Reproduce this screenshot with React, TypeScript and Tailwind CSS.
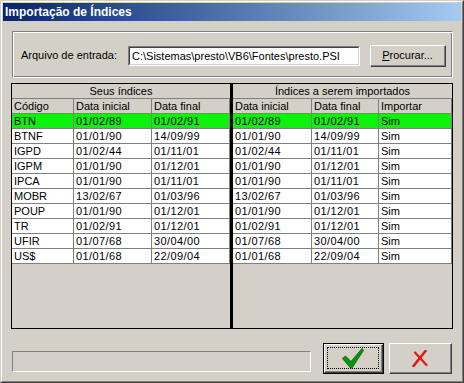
const rows = [
  ["BTN", "01/02/89", "01/02/91"],
  ["BTNF", "01/01/90", "14/09/99"],
  ["IGPD", "01/02/44", "01/11/01"],
  ["IGPM", "01/01/90", "01/12/01"],
  ["IPCA", "01/01/90", "01/11/01"],
  ["MOBR", "13/02/67", "01/03/96"],
  ["POUP", "01/01/90", "01/12/01"],
  ["TR", "01/02/91", "01/12/01"],
  ["UFIR", "01/07/68", "30/04/00"],
  ["US$", "01/01/68", "22/09/04"],
];

const cell =
  "h-[15px] border-r border-b border-[#808080] pl-[2px] leading-[14px] whitespace-nowrap overflow-hidden";
const date = "tracking-[0.4px]";

function Panel({
  title,
  cols,
  heads,
  data,
}: {
  title: string;
  cols: string;
  heads: string[];
  data: string[][];
}) {
  return (
    <div className="flex flex-col">
      <div className="h-[15px] border-b border-[#808080] bg-[#d4d0c8] text-center leading-[14px]">
        {title}
      </div>
      <div className={`grid ${cols} bg-[#d4d0c8]`}>
        {heads.map((h) => (
          <div key={h} className={cell}>
            {h}
          </div>
        ))}
      </div>
      {data.map((r, i) => (
        <div
          key={i}
          className={`grid ${cols} ${i === 0 ? "bg-[#0cf20c]" : "bg-white"}`}
        >
          {r.map((c, j) => (
            <div key={j} className={`${cell} ${c.includes("/") ? date : ""}`}>
              {c}
            </div>
          ))}
        </div>
      ))}
    </div>
  );
}

function CheckIcon() {
  return (
    <svg width="22" height="21" viewBox="0 0 22 21">
      <path
        d="M0.5 10.5 L3.5 8 L9 13.5 L20 0.5 L21.5 2.5 L10 20 L8.5 20 Z"
        fill="#0b930b"
        stroke="#056005"
        strokeWidth="0.8"
        strokeLinejoin="round"
      />
    </svg>
  );
}

function CrossIcon() {
  return (
    <svg width="16" height="17" viewBox="0 0 16 17">
      <path d="M1.5 16 L13.5 1" stroke="#e01818" strokeWidth="2.6" strokeLinecap="round" />
      <path d="M3 2.5 L14.5 15" stroke="#e01818" strokeWidth="2.2" strokeLinecap="round" />
    </svg>
  );
}

export default function App() {
  return (
    <div className="w-[464px] h-[383px] border border-t-[#d4d0c8] border-l-[#d4d0c8] border-r-[#404040] border-b-[#404040] bg-[#d4d0c8] font-['Liberation_Sans',Arial,sans-serif] text-[11px] text-black">
      <div className="h-full flex flex-col border border-t-white border-l-white border-r-[#808080] border-b-[#808080] p-px">
        <div className="h-[18px] shrink-0 bg-gradient-to-r from-[#0a246a] to-[#a6caf0] pl-[2px] text-[12px] font-bold leading-[18px] text-white">
          Importação de Índices
        </div>

        <div className="flex flex-1 flex-col pl-[8px]">
          <div className="ml-px mt-[10px] flex h-[47px] w-[441px] items-center border border-t-[#808080] border-l-[#808080] border-r-white border-b-white shadow-[inset_1px_1px_0_#fff,inset_-1px_-1px_0_#808080] pl-[8px]">
            <span className="mt-[2px]">Arquivo de entrada:</span>
            <div className="ml-[11px] mt-[2px] h-[20px] w-[232px] border border-t-[#808080] border-l-[#808080] border-r-white border-b-white">
              <div className="h-full border border-t-[#404040] border-l-[#404040] border-r-[#d4d0c8] border-b-[#d4d0c8] bg-white pl-[2px] leading-[16px] whitespace-nowrap">
                C:\Sistemas\presto\VB6\Fontes\presto.PSI
              </div>
            </div>
            <button className="ml-[10px] mt-[2px] h-[22px] w-[76px] border border-t-white border-l-white border-r-[#404040] border-b-[#404040] bg-[#d4d0c8]">
              <span className="flex h-full items-center justify-center border-r border-b border-[#808080]">
                <span className="underline">P</span>rocurar...
              </span>
            </button>
          </div>

          <div className="mt-[5px] flex h-[246px] w-[442px] border border-black bg-[#d4d0c8]">
            <div className="w-[218px]">
              <Panel
                title="Seus índices"
                cols="grid-cols-[62px_78px_78px]"
                heads={["Código", "Data inicial", "Data final"]}
                data={rows}
              />
            </div>
            <div className="w-[3px] bg-black" />
            <div className="w-[219px]">
              <Panel
                title="Índices a serem importados"
                cols="grid-cols-[79px_67px_73px]"
                heads={["Data inicial", "Data final", "Importar"]}
                data={rows.map((r) => [r[1], r[2], "Sim"])}
              />
            </div>
          </div>

          <div className="flex items-start">
            <div className="ml-px mt-[22px] h-[21px] w-[299px] border border-t-[#808080] border-l-[#808080] border-r-white border-b-white" />
            <button className="ml-[12px] mt-[14px] h-[31px] w-[61px] border border-black bg-[#d4d0c8]">
              <div className="h-full border border-t-white border-l-white border-r-[#404040] border-b-[#404040]">
                <div className="h-full border-r border-b border-[#808080] p-[2px]">
                  <div className="flex h-full items-center justify-center border border-dotted border-black">
                    <CheckIcon />
                  </div>
                </div>
              </div>
            </button>
            <button className="ml-[5px] mt-[14px] h-[31px] w-[63px] border border-t-white border-l-white border-r-[#404040] border-b-[#404040] bg-[#d4d0c8]">
              <div className="flex h-full items-center justify-center border-r border-b border-[#808080]">
                <CrossIcon />
              </div>
            </button>
          </div>
        </div>
      </div>
    </div>
  );
}
